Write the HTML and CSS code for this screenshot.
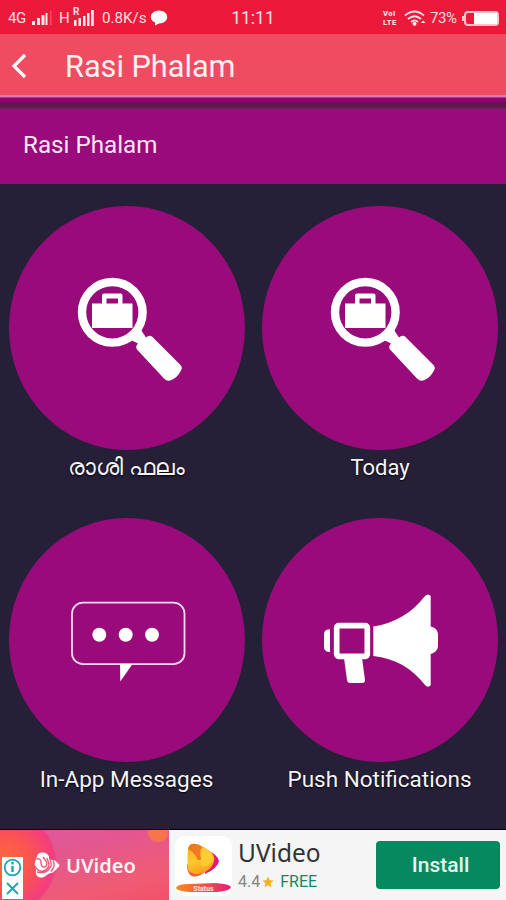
FILE: index.html
```html
<!DOCTYPE html>
<html lang="ml">
<head>
    <meta charset="UTF-8">
    <meta name="viewport" content="width=device-width, initial-scale=1.0">
    <title>Rasi Phalam</title>
    <link rel="stylesheet" href="styles.css">
</head>
<body>
    <svg class="defs" width="0" height="0">
        <symbol id="icon-search" viewBox="0 0 236 244">
            <circle cx="103.3" cy="106.3" r="30.3" fill="none" stroke="#fff" stroke-width="8.4"/>
            <path fill="#fff" fill-rule="evenodd" d="M83 97.5h10v-8q0-2 2-2h16.500q2 0 2 2v8h10v24.500H83zM97.500 92.500v5h11.500v-5z"/>
            <path fill="#fff" d="M122 134l10-10 5 7.500q3-3 6-1l28 28q3 3 1 6-4 8-11 10-3 1-6-2l-27-29q-2-3 1-6z"/>
        </symbol>
    </svg>

    <div class="status-bar">
        <span class="net">4G</span>
        <svg class="signal" width="20" height="16" viewBox="0 0 20 16">
            <path fill="#ffe6e9" d="M0 11h3v4H0zM5 8h3v7H5zM9.500 5h3v10h-3zM13.500 3h2v12h-2z"/>
            <path fill="#f14a60" d="M18 1h1.500v14H18z"/>
        </svg>
        <span class="net net-h">H</span>
        <span class="roaming">
            <span class="roaming-r">R</span>
            <svg width="22" height="18" viewBox="0 0 22 18">
                <path fill="#ffe6e9" d="M1 11h2.500v6H1zM5.500 9H8v8H5.500zM10 7h2.500v10H10zM14 4h2.500v13H14zM18 1h2.800v16H18z"/>
            </svg>
        </span>
        <span class="speed">0.8K/s</span>
        <svg class="bubble" width="18" height="16" viewBox="0 0 18 16">
            <path fill="#fff" d="M9 .5c4.600 0 8.200 2.900 8.200 6.500S13.600 13.500 9 13.500L5 15.500 5 12.500C2.400 11.500.8 9.500.8 7 .8 3.400 4.400.5 9 .5z"/>
        </svg>
        <span class="clock">11:11</span>
        <span class="volte"><span>VoI</span><span>LTE</span></span>
        <svg class="wifi" width="22" height="17" viewBox="0 0 22 17">
            <g fill="none" stroke="#ffe0e4" stroke-width="1.700">
                <path d="M1 5.500q9.500-8 19 0"/>
                <path d="M4 9q6.500-5.500 13 0"/>
                <path d="M7 12q3.500-3 7 0"/>
            </g>
            <circle cx="10.500" cy="13.800" r="1.900" fill="#fff"/>
            <path fill="#fff" d="M17 13l2-2.500 2.500 2.500z"/>
        </svg>
        <span class="percent">73%</span>
        <span class="battery"><span class="battery-level"></span></span>
    </div>

    <div class="app-bar">
        <svg class="back" width="16" height="26" viewBox="0 0 16 26">
            <path d="M14 2L3 13l11 11" fill="none" stroke="#fff" stroke-width="3.200"/>
        </svg>
        <h1>Rasi Phalam</h1>
    </div>

    <div class="strip"></div>
    <h2 class="section-title">Rasi Phalam</h2>

    <div class="menu">
        <div class="tile">
            <div class="circle">
                <svg width="236" height="244"><use href="#icon-search"/></svg>
            </div>
            <span class="label">രാശി ഫലം</span>
        </div>
        <div class="tile">
            <div class="circle">
                <svg width="236" height="244"><use href="#icon-search"/></svg>
            </div>
            <span class="label label-today">Today</span>
        </div>
        <div class="tile">
            <div class="circle">
                <svg width="236" height="244" viewBox="0 0 236 244">
                    <rect x="63" y="84.700" width="112.500" height="61.500" rx="11" fill="none" stroke="#f3d9ee" stroke-width="1.800"/>
                    <g fill="#fff">
                        <circle cx="90.300" cy="116.700" r="7"/>
                        <circle cx="116.700" cy="116.700" r="7"/>
                        <circle cx="143" cy="116.700" r="7"/>
                        <path d="M111 146h12.500l-12.200 17.500z"/>
                    </g>
                </svg>
            </div>
            <span class="label">In-App Messages</span>
        </div>
        <div class="tile">
            <div class="circle">
                <svg width="236" height="244" viewBox="0 0 236 244">
                    <rect x="74.700" y="107.700" width="30.600" height="30.600" rx="2" fill="none" stroke="#fff" stroke-width="5.700"/>
                    <g fill="#fff">
                        <path d="M68 111.300V134q-6 0-6-5v-13q0-4.700 6-4.700z"/>
                        <path d="M82 140h18l3 22q0 3-3 3H88q-2.500 0-3-3z"/>
                        <path d="M111.300 108.500C133 105 150 95 163 78q3-3 5.700 0v30.500c5 1 7.300 4.500 7.300 8v11c0 4-3 7.500-7.300 8.500v31q-2.500 3.500-5.700 0C150 150 133 140.500 111.300 138z"/>
                    </g>
                </svg>
            </div>
            <span class="label">Push Notifications</span>
        </div>
    </div>

    <div class="ad">
        <div class="ad-banner">
            <div class="ad-choices">
                <svg width="21" height="42" viewBox="0 0 21 42" fill="none" stroke="#1ba3b8" stroke-width="1.800">
                    <circle cx="10.500" cy="10.500" r="7.800"/>
                    <path d="M10.500 9v6M10.500 5v2.400" stroke-width="2.400"/>
                    <path d="M5 26l11 11M16 26L5 37"/>
                </svg>
            </div>
            <svg class="ad-logo" width="26" height="28" viewBox="0 0 26 28">
                <path fill="#fff" d="M3 5q1-4 6-3.500 4 0 6 4v3l6 1 4 4q1 1 0 2l-6 6-4 1-5 3.500q-4 1.500-7-1-2-3-1-6l-1.500-6z"/>
                <path fill="none" stroke="#ee5877" stroke-width="1.400" d="M2.500 8q4-1 4.500 3 0 6 4 5 3-2 1-6L9 6M1 15q3 6 8 5 6-2 6-7l-2-6M3 21q8 2 12-3 4-4 1-9M19 9.500q3 5-2 11"/>
            </svg>
            <span class="ad-brand">UVideo</span>
        </div>
        <div class="ad-app">
            <div class="ad-icon">
                <svg width="57" height="57" viewBox="0 0 57 57">
                    <defs>
                        <linearGradient id="ribbon"><stop offset="0" stop-color="#f68a22"/><stop offset=".6" stop-color="#f04a4c"/><stop offset="1" stop-color="#e8187f"/></linearGradient>
                        <linearGradient id="drop" x2=".3" y2="1"><stop offset="0" stop-color="#f9a51f"/><stop offset=".6" stop-color="#fdc92b"/><stop offset="1" stop-color="#f9a21f"/></linearGradient>
                    </defs>
                    <path fill="#e6187e" d="M32 14q11 5 12 11-1 7-14 13z"/>
                    <path fill="#ee5a36" d="M12 28q0 10 5 12 5 2 13-4z"/>
                    <path fill="url(#drop)" d="M13 13q1-6 8-5 6 1 15 8 6 6 1 14-4 6-13 8-7 1-11-4-1-9 0-21z"/>
                    <path fill="#ef7a22" d="M13 13q1-6 8-5 7 1 6 6-3 3-1 8 0 3-3 2-4-8-10-11z"/>
                    <path fill="#fdd03a" d="M25 14q3-4 7-1l4 4q3 7-2 12-5 3-9-1 4-5 0-14z" opacity=".7"/>
                    <path fill="url(#ribbon)" d="M1 52q1-4 13-4l27-1q14 1 15 4-1 4-14 5H15Q2 55 1 52z"/>
                    <text x="28.500" y="54.500" text-anchor="middle" class="ribbon-text">Status</text>
                </svg>
            </div>
            <div class="ad-info">
                <div class="ad-name">UVideo</div>
                <div class="ad-meta">
                    <span class="rating">4.4</span>
                    <svg width="12" height="12" viewBox="0 0 24 24"><path fill="#f5b21b" d="M12 1l3.300 7.300 8 .9-6 5.300 1.700 8L12 18.500 5 22.500l1.700-8-6-5.300 8-.9z"/></svg>
                    <span class="free">FREE</span>
                </div>
            </div>
            <a class="install">Install</a>
        </div>
    </div>
</body>
</html>
```
FILE: styles.css
```css
* {
    box-sizing: border-box;
}
body {
    margin: 0;
    width: 506px;
    height: 900px;
    overflow: hidden;
    display: flex;
    flex-direction: column;
    font-family: Roboto, "Noto Sans", sans-serif;
    background-color: #252037;
    color: #fff;
}
svg {
    display: block;
    flex: none;
}
.defs {
    position: absolute;
}

/* status bar */
.status-bar {
    position: relative;
    display: flex;
    align-items: center;
    height: 34px;
    padding: 2px 7px 0 8px;
    background-color: #eb1a3b;
    color: #ffdfe3;
    font-size: 15px;
}
.net {
    width: 19px;
    font-size: 15px;
    letter-spacing: -0.5px;
}
.signal {
    margin-left: 5px;
}
.net-h {
    width: 11px;
    margin-left: 7px;
}
.roaming {
    position: relative;
    margin-left: 3px;
}
.roaming-r {
    position: absolute;
    left: 0;
    top: -2px;
    font-size: 10px;
    font-weight: bold;
    line-height: 10px;
}
.speed {
    width: 46px;
    margin-left: 7px;
    white-space: nowrap;
    font-size: 15.2px;
}
.bubble {
    margin-left: 2px;
}
.clock {
    position: absolute;
    left: 0;
    right: 0;
    text-align: center;
    font-size: 17.5px;
}
.volte {
    display: flex;
    flex-direction: column;
    margin-left: auto;
    width: 17px;
    font-size: 7.5px;
    font-weight: 900;
    line-height: 9px;
    letter-spacing: 0.5px;
}
.wifi {
    margin-left: 4px;
}
.percent {
    width: 29px;
    margin-left: 4px;
    font-size: 15px;
    letter-spacing: -0.4px;
}
.battery {
    position: relative;
    display: flex;
    justify-content: flex-end;
    width: 35px;
    height: 15px;
    margin-left: 5px;
    border: 2px solid #ffc4cb;
    border-radius: 4px;
}
.battery::before {
    content: "";
    position: absolute;
    left: -4px;
    top: 3px;
    width: 2px;
    height: 5px;
    background-color: #ffc4cb;
}
.battery-level {
    width: 23px;
    background-color: #fff;
}

/* app bar */
.app-bar {
    display: flex;
    align-items: center;
    height: 61px;
    padding: 3px 0 0 11px;
    background-color: #ef4c61;
}
.app-bar h1 {
    margin: 0 0 0 38px;
    font-size: 30.7px;
    font-weight: normal;
    color: #fff0f2;
}
.strip {
    height: 14px;
    background: linear-gradient(#d77ab4 0 2px, #8d0070 3px 7px, #5f174d 8px 12px, #6f2a62 14px);
}
.section-title {
    height: 75px;
    margin: 0;
    padding: 0 23px 2px;
    font-size: 24.2px;
    font-weight: normal;
    line-height: 73px;
    background-color: #990b7b;
    color: #fbe6f7;
}

/* tiles */
.menu {
    display: grid;
    grid-template-columns: 253px 253px;
    grid-auto-rows: 312px;
    padding-top: 22px;
    height: 645px;
}
.tile {
    display: flex;
    flex-direction: column;
    align-items: center;
}
.circle {
    width: 236px;
    height: 244px;
    margin-left: 1px;
    border-radius: 50%;
    background-color: #990b7b;
}
.label {
    height: 34px;
    font-size: 22.5px;
    line-height: 34px;
    color: #f5f3f8;
    text-shadow: 0 1px 2px #000;
    white-space: nowrap;
}
.label-today {
    padding-left: 1px;
    font-size: 22px;
    line-height: 35px;
}

/* ad */
.ad {
    display: flex;
    height: 71px;
    border-top: 1px solid #000;
    background-color: #f5f5f5;
}
.ad-banner {
    position: relative;
    display: flex;
    align-items: center;
    width: 169px;
    padding-left: 34px;
    background:
        radial-gradient(circle at 158px 2px, #f5764a 0 9px, transparent 11px),
        radial-gradient(circle at 5px 32px, #ff6a3c 0, #fb5550 25px, #f23d80 49px, transparent 52px),
        linear-gradient(165deg, #dc5a9f, #e3578f 35%, #f05c74 75%, #f25068);
}
.ad-choices {
    position: absolute;
    left: 2px;
    bottom: 1px;
    background-color: #fff;
}
.ad-brand {
    margin-left: 6px;
    font-family: "Noto Sans", sans-serif;
    font-size: 20px;
    font-weight: 600;
    color: #fff3f5;
}
.ad-app {
    display: flex;
    flex: 1;
    padding: 6px 6px 0;
}
.ad-icon {
    flex: none;
    width: 57px;
    height: 60px;
    border-radius: 9px;
    background-color: #fff;
}
.ribbon-text {
    font: bold 7px Roboto, sans-serif;
    fill: #ffe9dc;
}
.ad-info {
    flex: none;
    width: 144px;
    padding-left: 6px;
}
.ad-name {
    height: 32px;
    font-family: "Noto Sans", sans-serif;
    font-size: 24.5px;
    line-height: 34px;
    color: #333;
}
.ad-meta {
    display: flex;
    align-items: center;
    height: 27px;
    font-size: 16px;
    color: #858585;
}
.ad-meta svg {
    margin: 0 6px 0 2px;
}
.free {
    color: #0d8a63;
}
.install {
    flex: none;
    width: 124px;
    height: 48px;
    margin-top: 5px;
    padding-left: 5px;
    border-radius: 4px;
    background-color: #048a5e;
    color: #e4f6ee;
    font-size: 21px;
    font-weight: 500;
    line-height: 48px;
    text-align: center;
}
```
